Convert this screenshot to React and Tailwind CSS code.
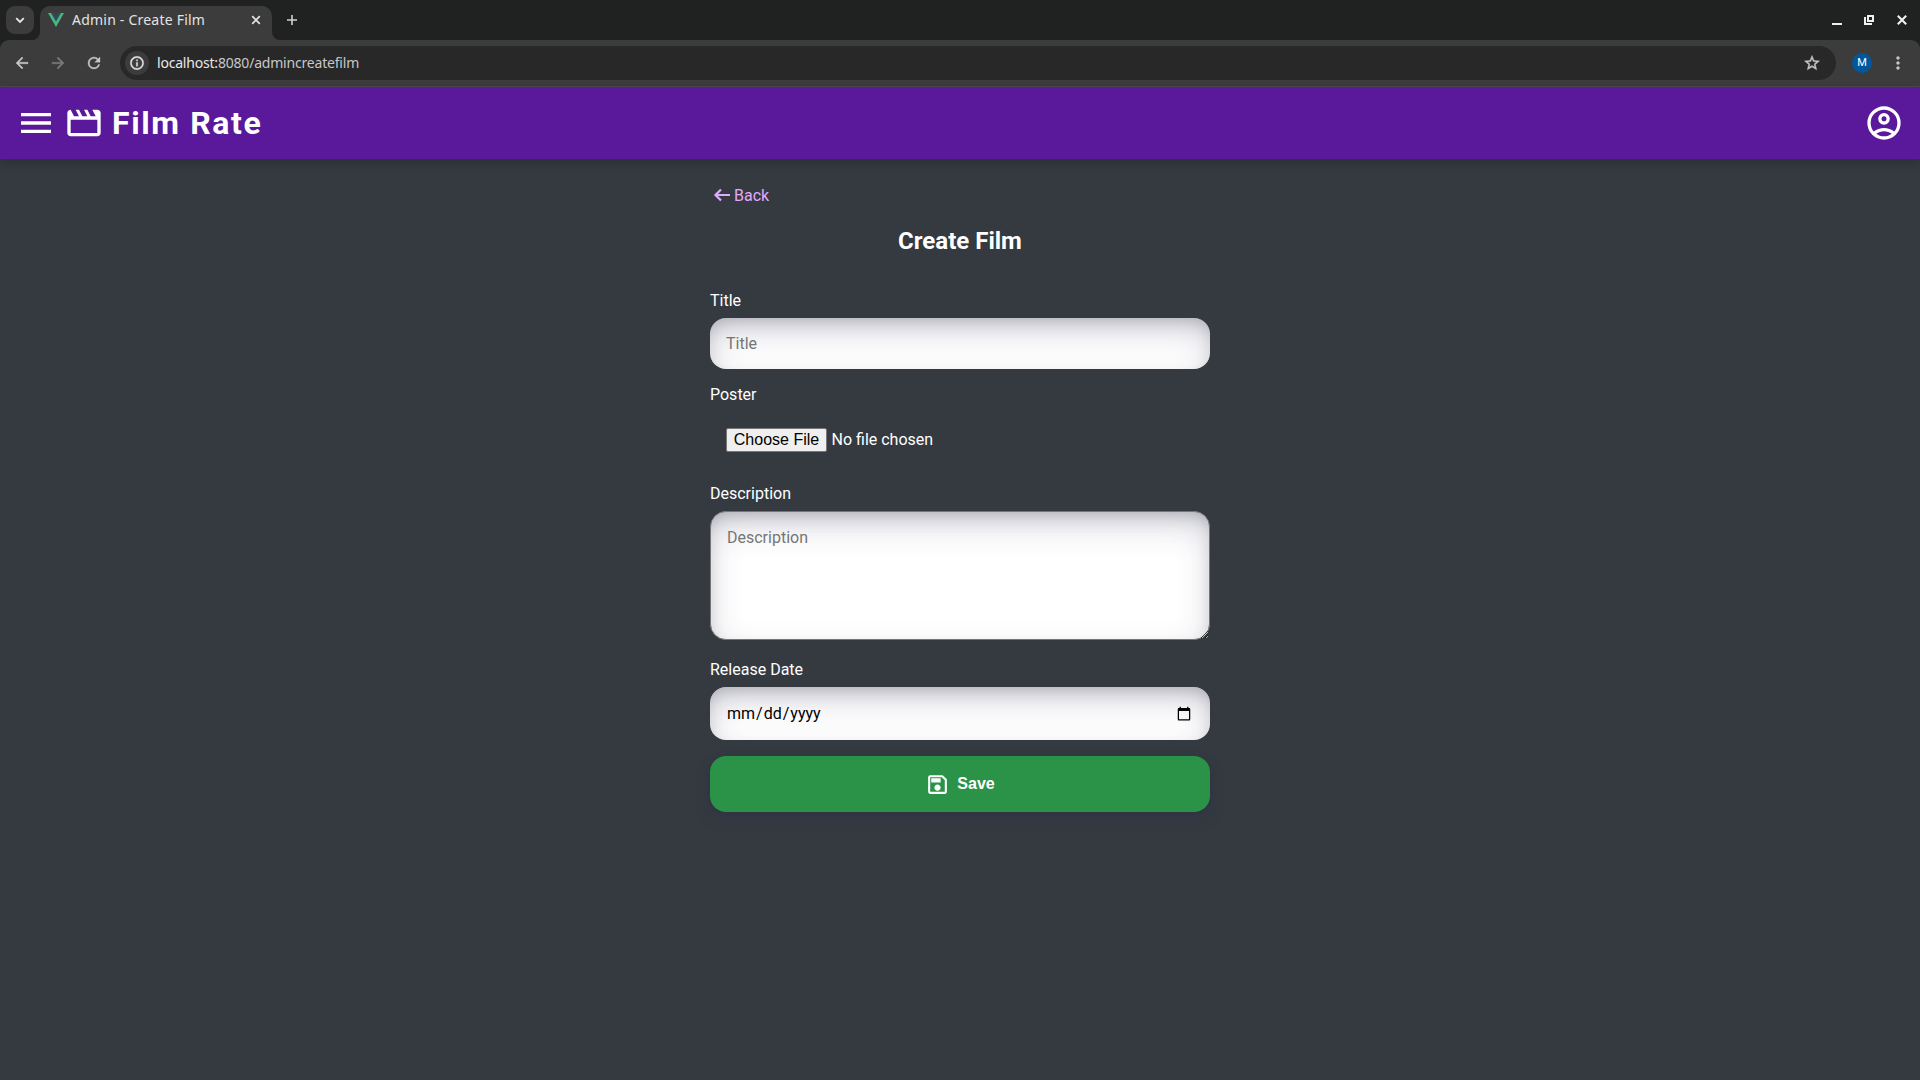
import React from 'react';

function Icon({ d, size = 24, viewBox = '0 0 24 24', className = '', stroke = 0 }) {
  return (
    <svg width={size} height={size} viewBox={viewBox} fill="currentColor" stroke="currentColor" strokeWidth={stroke} className={`shrink-0 ${className}`}>
      <path d={d} />
    </svg>
  );
}

const ICONS = {
  menu: 'M3 18h18v-2H3v2zm0-5h18v-2H3v2zm0-7v2h18V6H3z',
  movie: 'M4 4l2 4h3L7 4h2l2 4h3l-2-4h2l2 4h3l-2-4h3q.825 0 1.413.588T22 6v12q0 .825-.587 1.413T20 20H4q-.825 0-1.412-.587T2 18V6q0-.825.588-1.412T4 4m0 6v8h16v-8z',
  account: 'M5.85 17.1q1.275-.975 2.85-1.537T12 15t3.3.563t2.85 1.537q.875-1.025 1.363-2.325T20 12q0-3.325-2.337-5.663T12 4T6.337 6.338T4 12q0 1.475.488 2.775T5.85 17.1M12 13q-1.475 0-2.488-1.012T8.5 9.5t1.013-2.488T12 6t2.488 1.013T15.5 9.5t-1.012 2.488T12 13m0 9q-2.075 0-3.9-.788t-3.175-2.137T2.788 15.9T2 12t.788-3.9t2.137-3.175T8.1 2.788T12 2t3.9.788t3.175 2.137T21.213 8.1T22 12t-.788 3.9t-2.137 3.175t-3.175 2.138T12 22m0-2q1.325 0 2.5-.387t2.15-1.113q-.975-.725-2.15-1.112T12 17t-2.5.388T7.35 18.5q.975.725 2.15 1.113T12 20m0-9q.65 0 1.075-.425T13.5 9.5t-.425-1.075T12 8t-1.075.425T10.5 9.5t.425 1.075T12 11',
  back: 'M20 11H7.83l5.59-5.59L12 4l-8 8 8 8 1.41-1.41L7.83 13H20v-2z',
  forward: 'M12 4l-1.41 1.41L16.17 11H4v2h12.17l-5.58 5.59L12 20l8-8z',
  reload: 'M17.65 6.35A7.958 7.958 0 0 0 12 4a8 8 0 1 0 7.73 10h-2.08A6 6 0 1 1 12 6c1.66 0 3.14.69 4.22 1.78L13 11h7V4l-2.35 2.35z',
  info: 'M11 17h2v-6h-2v6zm1-15C6.48 2 2 6.48 2 12s4.48 10 10 10 10-4.48 10-10S17.52 2 12 2zm0 18c-4.41 0-8-3.59-8-8s3.59-8 8-8 8 3.59 8 8-3.59 8-8 8zM11 9h2V7h-2v2z',
  star: 'M22 9.24l-7.19-.62L12 2 9.19 8.63 2 9.24l5.46 4.73L5.82 21 12 17.27 18.18 21l-1.63-7.03L22 9.24zM12 15.4l-3.76 2.27 1-4.28-3.32-2.88 4.38-.38L12 6.1l1.71 4.04 4.38.38-3.32 2.88 1 4.28L12 15.4z',
  dots: 'M12 8c1.1 0 2-.9 2-2s-.9-2-2-2-2 .9-2 2 .9 2 2 2zm0 2c-1.1 0-2 .9-2 2s.9 2 2 2 2-.9 2-2-.9-2-2-2zm0 6c-1.1 0-2 .9-2 2s.9 2 2 2 2-.9 2-2-.9-2-2-2z',
};

function TabStrip() {
  return (
    <div className="flex h-10 items-start bg-[#202221]">
      <div className="ml-1.5 mt-1.5 flex h-7 w-7 items-center justify-center rounded-[9px] bg-[#3c3c3c] text-[#e8e8e8]">
        <svg width="10" height="10" viewBox="0 0 10 10" fill="none" stroke="currentColor" strokeWidth="1.8"><path d="M1.2 3.2 5 7l3.8-3.8" /></svg>
      </div>
      <div className="mt-1.5 flex h-[34px] w-[6px] items-end overflow-hidden">
        <svg width="6" height="8" viewBox="2 0 6 8" fill="#3c3c3c"><path d="M8 0v8H0a8 8 0 0 0 8-8" /></svg>
      </div>
      <div className="mt-1.5 flex h-[34px] w-[232px] items-center rounded-t-[10px] bg-[#3c3c3c] pb-1.5 pl-2">
        <svg width="16" height="14" viewBox="0 0 16 14" className="shrink-0">
          <path d="M0 0h3.2L8 8.3 12.8 0H16L8 13.9z" fill="#41b883" />
          <path d="M3.2 0H6l2 3.5L10 0h2.8L8 8.3z" fill="#35495e" />
        </svg>
        <span className="ml-2 w-[134px] whitespace-nowrap font-['Noto_Sans','Open_Sans',sans-serif] text-[14px] leading-5 tracking-[0.22px] text-[#e3e3e3]">Admin - Create Film</span>
        <svg width="10" height="10" viewBox="0 0 10 10" stroke="#e3e3e3" strokeWidth="1.7" className="ml-[45px]"><path d="M1.2 1.2l7.6 7.6M8.8 1.2 1.2 8.8" /></svg>
      </div>
      <svg width="8" height="8" viewBox="0 0 8 8" fill="#3c3c3c" className="mt-8"><path d="M0 0v8h8a8 8 0 0 1-8-8" /></svg>
      <svg width="10" height="10" viewBox="0 0 10 10" stroke="#d0d0d0" strokeWidth="1.6" className="ml-[7px] mt-[15px]"><path d="M5 0v10M0 5h10" /></svg>
      <div className="ml-auto mr-[13px] flex h-10 items-center text-[#f0f0f0]">
        <svg width="10" height="10" viewBox="0 0 10 10" fill="currentColor"><path d="M0 8h10v2H0z" /></svg>
        <svg width="10" height="10" viewBox="0 0 10 10" fill="currentColor" className="ml-[22px]"><path fillRule="evenodd" d="M3 0h7v7H3zM5 2v3h3V2zM0 2h2v6h6v2H0z" /></svg>
        <svg width="10" height="10" viewBox="0 0 10 10" stroke="currentColor" strokeWidth="2.1" className="ml-[23px]"><path d="M.8.8l8.4 8.4M9.2.8.8 9.2" /></svg>
      </div>
    </div>
  );
}

function Toolbar() {
  return (
    <div className="bg-[#202221]">
      <div className="flex h-[47px] items-center rounded-t-[9px] border-b border-[#4a4a4a] bg-[#3c3c3c] text-[#c7c7c7]">
        <Icon d={ICONS.back} size={18} stroke={0.5} className="ml-[13px]" />
        <Icon d={ICONS.forward} size={18} stroke={0.5} className="ml-[18px] text-[#7b7b7b]" />
        <Icon d={ICONS.reload} size={18} stroke={0.4} className="ml-[18px]" />
        <div className="ml-[17px] flex h-[34px] w-[1716px] items-center rounded-full bg-[#282828] pl-[5px]">
          <div className="flex h-6 w-6 items-center justify-center rounded-full bg-[#3c3c3c] text-[#e3e3e3]">
            <Icon d={ICONS.info} size={16} stroke={0.5} />
          </div>
          <div className="ml-2 whitespace-nowrap font-['Noto_Sans','Open_Sans',sans-serif] text-[14px] leading-5 tracking-[-0.2px] text-[#c7c7c7]">
            <span className="text-[#e8e8e8]">localhost:</span>8080/admincreatefilm
          </div>
          <Icon d={ICONS.star} size={18} stroke={0.6} className="ml-auto mr-[15px]" />
        </div>
        <div className="ml-4 flex h-5 w-5 items-center justify-center rounded-full bg-[#00579b] font-['Roboto',sans-serif] text-[11px] text-white">M</div>
        <Icon d={ICONS.dots} size={20} className="ml-4" />
      </div>
    </div>
  );
}

function AppHeader() {
  return (
    <header className="relative flex h-[72px] items-center bg-[#5a189a] px-4 text-white shadow-[0_4px_10px_rgba(0,0,0,0.2)]">
      <Icon d={ICONS.menu} size={40} />
      <Icon d={ICONS.movie} size={40} className="ml-2" />
      <h1 className="ml-2 text-[32px] font-bold leading-[38px] tracking-[1.6px]">Film Rate</h1>
      <Icon d={ICONS.account} size={40} className="ml-auto" />
    </header>
  );
}

const FIELD =
  'block w-full rounded-2xl bg-white p-4 shadow-[inset_0_14px_34px_-3px_rgba(50,50,93,0.23),inset_0_8px_18px_-7px_rgba(0,0,0,0.25)] placeholder:text-[#757575]';

function Field({ label, className = '', children }) {
  return (
    <label className={`block ${className}`}>
      <span className="mb-2 block leading-[19px]">{label}</span>
      {children}
    </label>
  );
}

function CreateFilm() {
  return (
    <main className="mx-auto w-[500px] pt-6 text-[16px] text-white">
      <a className="flex h-6 items-center gap-0.5 pl-0.5 text-[#e0aaff]">
        <svg width="20" height="20" viewBox="0 0 20 20" fill="none" stroke="currentColor" strokeWidth="2.2"><path d="M18 10H3.5M9 4.5 3.5 10 9 15.5" /></svg>
        <span className="leading-[19px]">Back</span>
      </a>
      <h2 className="mt-5 text-center text-[24px] font-bold leading-7">Create Film</h2>
      <form className="mt-9">
        <Field label="Title">
          <input type="text" placeholder="Title" className={`${FIELD} h-[51px]`} />
        </Field>
        <Field label="Poster" className="mt-4">
          <div className="flex h-[56px] items-center px-4">
            <span className="flex h-6 w-[101px] items-center justify-center rounded-[2px] border border-[#767676] bg-[#efefef] font-['Liberation_Sans',sans-serif] text-black">Choose File</span>
            <span className="ml-[4.5px]">No file chosen</span>
          </div>
        </Field>
        <Field label="Description" className="mt-4">
          <textarea placeholder="Description" className={`${FIELD} h-[129px] border border-[#767676] leading-[19px]`} />
        </Field>
        <Field label="Release Date" className="mt-5">
          <input type="date" className={`${FIELD} h-[53px] text-black`} />
        </Field>
        <button type="button" className="mt-4 flex h-14 w-full items-center justify-center gap-[7px] rounded-2xl bg-[#2b9348] font-['Liberation_Sans',sans-serif] font-bold text-white shadow-[0_7px_14px_0_rgba(50,50,93,0.25),0_3px_6px_0_rgba(0,0,0,0.1)]">
          <svg width="25" height="25" viewBox="0 0 24 24" fill="currentColor"><path fillRule="evenodd" d="M21 7v12q0 .825-.587 1.413T19 21H5q-.825 0-1.412-.587T3 19V5q0-.825.588-1.412T5 3h12zm-2 .85L16.15 5H5v14h14zM12 18q1.25 0 2.125-.875T15 15t-.875-2.125T12 12t-2.125.875T9 15t.875 2.125T12 18m-6-8h9V6H6z" /></svg>
          Save
        </button>
      </form>
    </main>
  );
}

export default function App() {
  return (
    <div className="flex h-[1080px] w-[1920px] flex-col overflow-hidden bg-[#343a40] font-['Roboto',sans-serif]">
      <TabStrip />
      <Toolbar />
      <AppHeader />
      <CreateFilm />
    </div>
  );
}
